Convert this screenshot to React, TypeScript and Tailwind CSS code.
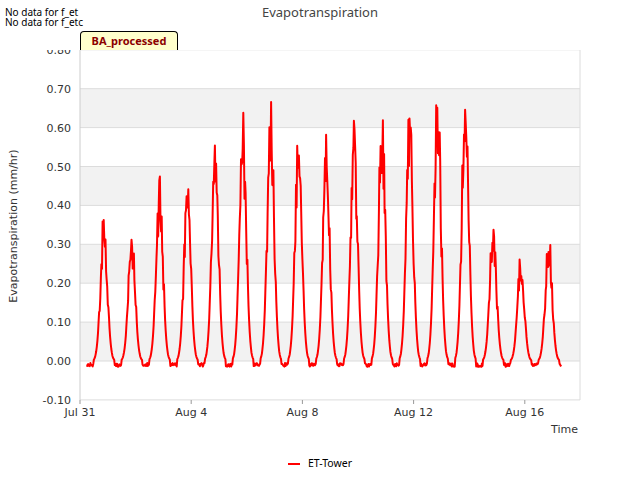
const X0 = 80, Y0 = 311, DX = 27.8, DY = 389;
const peaks = [0.37, 0.33, 0.46, 0.46, 0.56, 0.62, 0.67, 0.59, 0.58, 0.59, 0.64, 0.66, 0.69, 0.73, 0.35, 0.27, 0.32];

function rng(seed: number) {
  let s = seed;
  return () => {
    s = (s * 16807) % 2147483647;
    return (s - 1) / 2147483646;
  };
}

function buildPath() {
  const r = rng(42);
  const pts: string[] = [];
  for (let t = 0.25; t <= 17.33; t += 1 / 48) {
    let v = -0.01 + (r() - 0.5) * 0.01;
    for (let d = 0; d < peaks.length; d++) {
      const x = (t - (d + 0.86)) / 0.17;
      if (Math.abs(x) < 2.2) {
        const noise = Math.abs(x) < 1 ? 0.75 + r() * 0.3 : 0.95;
        v = Math.max(v, peaks[d] * Math.exp(-x * x) * noise);
      }
    }
    pts.push(`${(X0 + t * DX).toFixed(1)},${(Y0 - v * DY).toFixed(1)}`);
  }
  return "M" + pts.join("L");
}

const ticks = [0.8, 0.7, 0.6, 0.5, 0.4, 0.3, 0.2, 0.1, 0.0, -0.1];
const xt = [["Jul 31", 0], ["Aug 4", 4], ["Aug 8", 8], ["Aug 12", 12], ["Aug 16", 16]] as const;

export default function App() {
  return (
    <div className="w-[640px] h-[480px] bg-white flex flex-col font-['DejaVu_Sans',sans-serif] relative">
      <div className="absolute left-[5px] top-[7px] text-[10px] leading-[10px] text-black">
        <div>No data for f_et</div>
        <div>No data for f_etc</div>
      </div>
      <div className="h-[50px] flex justify-center pt-[3px] text-[13px] text-[#444]">Evapotranspiration</div>
      <svg width="640" height="390" fontFamily='"DejaVu Sans", sans-serif'>
        {[0.7, 0.5, 0.3, 0.1].map((v) => (
          <rect key={v} x={80} y={Y0 - v * DY} width={500} height={0.1 * DY} fill="#f2f2f2" />
        ))}
        {ticks.map((v) => (
          <g key={v}>
            <line x1={80} x2={580} y1={Y0 - v * DY} y2={Y0 - v * DY} stroke="#dcdcdc" />
            <text x={71} y={Y0 - v * DY + 4} fontSize="11" fill="#333" textAnchor="end">{v.toFixed(2)}</text>
          </g>
        ))}
        <line x1={80} x2={80} y1={0} y2={350} stroke="#ccc" />
        <line x1={580} x2={580} y1={0} y2={350} stroke="#dcdcdc" />
        {xt.map(([l, d]) => (
          <g key={l}>
            <line x1={X0 + d * DX} x2={X0 + d * DX} y1={350} y2={354} stroke="#999" />
            <text x={X0 + d * DX} y={366} fontSize="11" fill="#333" textAnchor="middle">{l}</text>
          </g>
        ))}
        <text x="578" y="383" fontSize="11" fill="#333" textAnchor="end">Time</text>
        <text transform="translate(17,176) rotate(-90)" fontSize="11" fill="#333" textAnchor="middle">Evapotranspiration (mm/hr)</text>
        <path d={buildPath()} fill="none" stroke="#ff0000" strokeWidth="2" strokeLinejoin="round" />
      </svg>
      <div className="absolute left-[80px] top-[31px] h-[19px] w-[98px] bg-[#ffffcc] border border-black border-b-0 rounded-tl-[4px] rounded-tr-[4px] flex items-center justify-center text-[11px] font-bold text-[#8b0000]">
        BA_processed
      </div>
      <div className="flex justify-center items-center gap-2 mt-[16px] text-[10.5px] text-black">
        <span className="w-[12px] h-[2px] bg-[#ff0000]" />
        <span>ET-Tower</span>
      </div>
    </div>
  );
}
